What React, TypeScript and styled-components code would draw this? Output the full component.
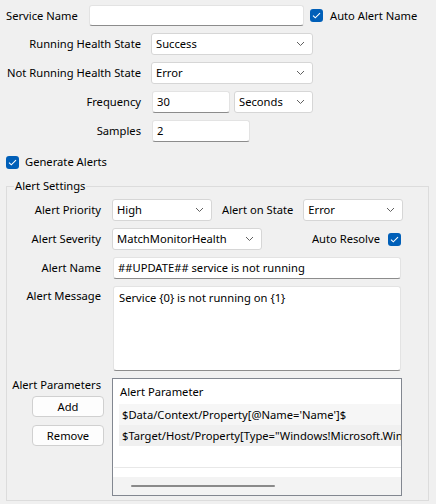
import React from 'react';
import styled, { createGlobalStyle } from 'styled-components';

const GlobalStyle = createGlobalStyle`
  html, body {
    margin: 0;
    padding: 0;
    background: #f0f0f0;
  }
  body {
    font-family: 'Noto Sans', 'Open Sans', sans-serif;
    font-size: 11.2px;
    line-height: 16px;
    color: #000;
  }
`;

const Page = styled.div`
  width: 436px;
  height: 504px;
  box-sizing: border-box;
  padding-top: 5px;
  background: #f0f0f0;
  overflow: hidden;
`;

const ServiceRow = styled.div`
  display: flex;
  align-items: center;
  padding-left: 6px;
  height: 21px;
`;

const Label = styled.span<{ $width?: number; $align?: string }>`
  display: inline-block;
  width: ${({ $width }) => ($width ? `${$width}px` : 'auto')};
  text-align: ${({ $align }) => $align || 'right'};
  white-space: nowrap;
  flex-shrink: 0;
`;

const TextBox = styled.div<{ $width?: number; $height?: number; $top?: boolean }>`
  box-sizing: border-box;
  width: ${({ $width }) => ($width ? `${$width}px` : '100%')};
  height: ${({ $height }) => $height || 22}px;
  background: #fff;
  border: 1px solid #e3e3e3;
  border-bottom-color: #8c8c8c;
  border-radius: 3px;
  padding: ${({ $top }) => ($top ? '3px 5px' : '0 4px')};
  display: flex;
  align-items: ${({ $top }) => ($top ? 'flex-start' : 'center')};
  white-space: nowrap;
  flex-shrink: 0;
`;

const ComboBox = styled.div<{ $width: number }>`
  box-sizing: border-box;
  width: ${({ $width }) => $width}px;
  height: 22px;
  background: #fff;
  border: 1px solid #d6d6d6;
  border-radius: 3px;
  padding: 0 7px 0 4px;
  display: flex;
  align-items: center;
  justify-content: space-between;
  flex-shrink: 0;
`;

const CheckRow = styled.label<{ $gap?: number }>`
  display: flex;
  align-items: center;
  gap: ${({ $gap }) => $gap || 6}px;
  white-space: nowrap;
`;

const CheckBox = styled.span`
  display: inline-flex;
  align-items: center;
  justify-content: center;
  width: 13px;
  height: 13px;
  border-radius: 3px;
  background: #005fb8;
  flex-shrink: 0;
`;

const FormGrid = styled.div`
  display: grid;
  grid-template-columns: 135px auto;
  column-gap: 10px;
  row-gap: 7px;
  align-items: center;
  margin-top: 7px;
  padding-left: 6px;
`;

const InlineGroup = styled.div`
  display: flex;
  align-items: center;
  gap: 4px;
`;

const GenerateRow = styled.div`
  margin-top: 12px;
  padding-left: 6px;
`;

const Group = styled.fieldset`
  margin: 8px 7px 0 6px;
  padding: 5px 0 4px 0;
  border: 1px solid #dcdcdc;
  min-width: 0;
`;

const Legend = styled.legend`
  margin-left: 7px;
  padding: 0 1px;
`;

const GroupRow = styled.div<{ $top?: boolean }>`
  display: flex;
  align-items: ${({ $top }) => ($top ? 'flex-start' : 'center')};
  margin-bottom: 7px;
`;

const GroupLabel = styled(Label)`
  width: 94px;
  margin-right: 11px;
`;

const Spacer = styled.div`
  flex: 1;
`;

const ParamsColumn = styled.div`
  width: 97px;
  margin-right: 8px;
  display: flex;
  flex-direction: column;
  align-items: flex-end;
  flex-shrink: 0;
`;

const ParamsLabel = styled.div`
  padding-right: 3px;
  margin-top: -1px;
  white-space: nowrap;
`;

const Button = styled.div<{ $mt: number }>`
  box-sizing: border-box;
  width: 72px;
  height: 21px;
  margin-top: ${({ $mt }) => $mt}px;
  background: #fdfdfd;
  border: 1px solid #d0d0d0;
  border-radius: 4px;
  display: flex;
  align-items: center;
  justify-content: center;
`;

const ListBox = styled.div`
  box-sizing: border-box;
  width: 290px;
  height: 118px;
  background: #fff;
  border: 1px solid #828790;
  display: flex;
  flex-direction: column;
  overflow: hidden;
`;

const ListHeader = styled.div`
  height: 25px;
  padding-left: 7px;
  display: flex;
  align-items: center;
  flex-shrink: 0;
`;

const ListRow = styled.div<{ $bg: string }>`
  height: 21px;
  margin-left: 6px;
  padding-left: 3px;
  background: ${({ $bg }) => $bg};
  display: flex;
  align-items: center;
  white-space: nowrap;
  overflow: hidden;
  flex-shrink: 0;
`;

const EmptyRow = styled.div`
  height: 21px;
  margin-left: 1px;
  border-bottom: 1px solid #e8e8e8;
  flex-shrink: 0;
`;

const ScrollArea = styled.div`
  margin-top: auto;
  height: 18px;
  background: #f3f3f3;
  display: flex;
  align-items: center;
  padding-left: 18px;
  flex-shrink: 0;
`;

const ScrollThumb = styled.div`
  width: 144px;
  height: 2px;
  border-radius: 1px;
  background: #8a8a8a;
`;

const Chevron = () => (
  <svg width="9" height="6" viewBox="0 0 9 6">
    <path d="M1 1 L4.5 4.5 L8 1" fill="none" stroke="#606060" strokeWidth="1" />
  </svg>
);

const Check = () => (
  <svg width="9" height="7" viewBox="0 0 9 7">
    <path d="M1 3.6 L3.3 5.8 L8 1.2" fill="none" stroke="#fff" strokeWidth="1.1" />
  </svg>
);

const Combo = ({ value, width }: { value: string; width: number }) => (
  <ComboBox $width={width}>
    <span>{value}</span>
    <Chevron />
  </ComboBox>
);

const params = [
  "$Data/Context/Property[@Name='Name']$",
  '$Target/Host/Property[Type="Windows!Microsoft.Windows.Computer"]/PrincipalName$',
];

const App = () => {
  return (
    <Page>
      <GlobalStyle />
      <ServiceRow>
        <Label $width={72} $align="left">Service Name</Label>
        <TextBox $width={215} $height={21} style={{ marginLeft: 11 }} />
        <CheckRow $gap={7} style={{ marginLeft: 6 }}>
          <CheckBox>
            <Check />
          </CheckBox>
          Auto Alert Name
        </CheckRow>
      </ServiceRow>

      <FormGrid>
        <Label>Running Health State</Label>
        <Combo value="Success" width={162} />
        <Label>Not Running Health State</Label>
        <Combo value="Error" width={162} />
        <Label>Frequency</Label>
        <InlineGroup>
          <TextBox $width={78} style={{ marginLeft: 1 }}>30</TextBox>
          <Combo value="Seconds" width={79} />
        </InlineGroup>
        <Label>Samples</Label>
        <TextBox $width={98} style={{ marginLeft: 1 }}>2</TextBox>
      </FormGrid>

      <GenerateRow>
        <CheckRow>
          <CheckBox>
            <Check />
          </CheckBox>
          Generate Alerts
        </CheckRow>
      </GenerateRow>

      <Group>
        <Legend>Alert Settings</Legend>
        <GroupRow>
          <GroupLabel>Alert Priority</GroupLabel>
          <Combo value="High" width={100} />
          <Label style={{ marginLeft: 10, marginRight: 10 }}>Alert on State</Label>
          <Combo value="Error" width={100} />
        </GroupRow>
        <GroupRow>
          <GroupLabel>Alert Severity</GroupLabel>
          <Combo value="MatchMonitorHealth" width={150} />
          <Spacer />
          <CheckRow $gap={8} style={{ flexDirection: 'row-reverse', marginRight: 27 }}>
            <CheckBox>
              <Check />
            </CheckBox>
            Auto Resolve
          </CheckRow>
        </GroupRow>
        <GroupRow>
          <GroupLabel>Alert Name</GroupLabel>
          <TextBox $width={288} style={{ marginLeft: 1 }}>##UPDATE## service is not running</TextBox>
        </GroupRow>
        <GroupRow $top>
          <GroupLabel style={{ marginTop: 2 }}>Alert Message</GroupLabel>
          <TextBox $width={288} $height={85} $top style={{ marginLeft: 1 }}>
            Service {'{0}'} is not running on {'{1}'}
          </TextBox>
        </GroupRow>
        <GroupRow $top style={{ marginBottom: 0 }}>
          <ParamsColumn>
            <ParamsLabel>Alert Parameters</ParamsLabel>
            <Button $mt={3}>Add</Button>
            <Button $mt={8}>Remove</Button>
          </ParamsColumn>
          <ListBox>
            <ListHeader>Alert Parameter</ListHeader>
            <ListRow $bg="#f6f6f6">{params[0]}</ListRow>
            <ListRow $bg="#f0f0f0">{params[1]}</ListRow>
            <EmptyRow />
            <ScrollArea>
              <ScrollThumb />
            </ScrollArea>
          </ListBox>
        </GroupRow>
      </Group>
    </Page>
  );
};

export default App;
